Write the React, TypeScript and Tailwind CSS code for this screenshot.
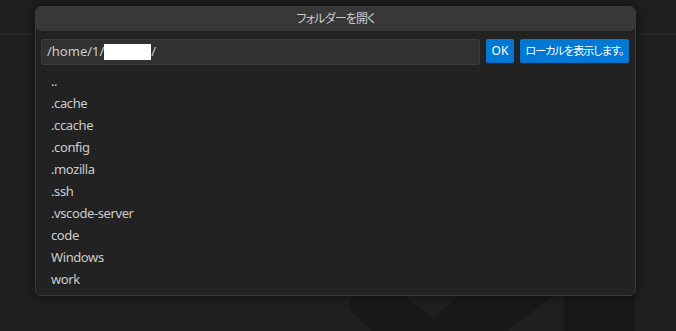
import { forwardRef } from 'react'

const folders = ['..', '.cache', '.ccache', '.config', '.mozilla', '.ssh', '.vscode-server', 'code', 'Windows', 'work']

const font = "[font-family:'Noto_Sans','Noto_Sans_CJK_JP',sans-serif]"

const Watermark = () => (
  <svg
    className="absolute left-[350px] top-[210px] h-[285px] w-[285px]"
    viewBox="0 0 100 100"
    aria-hidden
  >
    <path
      fill="#181818"
      fillRule="evenodd"
      d="M96.46 10.8 75.86.87a6.23 6.23 0 0 0-7.1 1.2L29.35 38.04 12.19 25.01a4.16 4.16 0 0 0-5.32.24l-5.5 5a4.17 4.17 0 0 0 0 6.16L16.26 50 1.37 63.59a4.17 4.17 0 0 0 0 6.16l5.5 5a4.16 4.16 0 0 0 5.32.24l17.16-13.03 39.41 35.96a6.22 6.22 0 0 0 7.1 1.2l20.6-9.91A6.25 6.25 0 0 0 100 83.58V16.42a6.25 6.25 0 0 0-3.54-5.62ZM75.02 72.7 45.11 50l29.91-22.7Z"
    />
  </svg>
)

const PathInput = forwardRef<HTMLDivElement>((_, ref) => (
  <div
    ref={ref}
    className="flex h-[26px] w-[439px] items-center rounded-[2px] border border-[#3c3c3c] bg-[#313131] pl-[5px] text-[13px] text-[#cccccc]"
  >
    <span>/home/1/</span>
    <span className="inline-block h-[16px] w-[47px] bg-white" />
    <span>/</span>
  </div>
))

PathInput.displayName = 'PathInput'

export default function App() {
  return (
    <div className={`relative h-[331px] w-[676px] overflow-hidden bg-[#1f1f1f] ${font}`}>
      <div className="h-[35px] border-b border-[#2b2b2b]" />
      <Watermark />

      <div className="absolute left-[35px] top-[6px] flex w-[601px] flex-col rounded-[6px] border border-[#393939] bg-[#222222] shadow-[0_0_8px_2px_rgba(0,0,0,0.36)]">
        <div className="flex h-[24px] items-center justify-center rounded-[5px] bg-[#383838] text-[12px] tracking-[-0.8px] text-[#cccccc] [font-feature-settings:'palt']">
          フォルダーを開く
        </div>

        <div className="flex items-start gap-[6px] pl-[5px] pr-[6px] pt-[8px]">
          <PathInput />
          <button className="flex h-[24px] w-[28px] items-center justify-center rounded-[2px] bg-[#0078d4] text-[12px] text-white">
            OK
          </button>
          <button className="flex h-[24px] w-[109px] items-center justify-center whitespace-nowrap rounded-[2px] bg-[#0078d4] text-[11px] tracking-[-0.9px] text-white [font-feature-settings:'palt']">
            ローカルを表示します。
          </button>
        </div>

        <ul className="mt-[6px] pb-[4px]">
          {folders.map((name) => (
            <li
              key={name}
              className="flex h-[22px] items-center px-[15px] text-[13px] tracking-[-0.4px] text-[#cccccc]"
            >
              {name}
            </li>
          ))}
        </ul>
      </div>
    </div>
  )
}
